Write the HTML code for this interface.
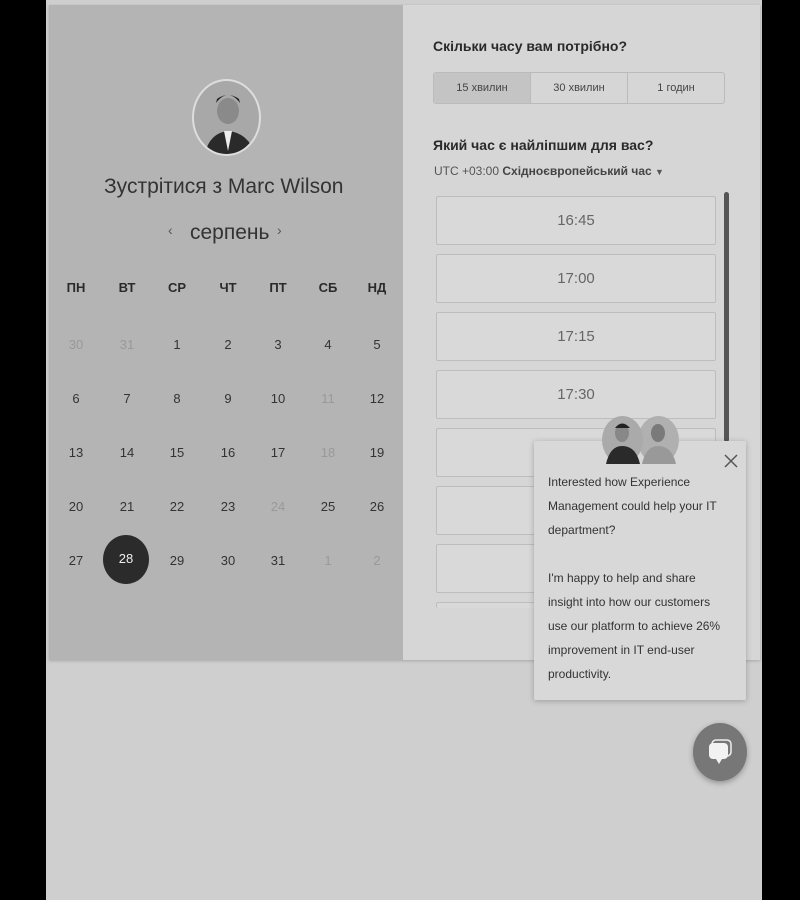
<!DOCTYPE html>
<html><head><meta charset="utf-8"><style>
*{margin:0;padding:0;box-sizing:border-box}
body{width:800px;height:900px;background:#000;position:relative;overflow:hidden;font-family:"Liberation Sans",sans-serif}
.page{position:absolute;left:46px;top:0;width:716px;height:900px;background:#cfcfcf}
.card{position:absolute;left:49px;top:5px;width:711px;height:655px;background:#d6d6d6;box-shadow:0 1px 3px rgba(0,0,0,.2)}
.left{position:absolute;left:49px;top:5px;width:354px;height:655px;background:#b4b4b4}
.abs{position:absolute}
.c{position:absolute;transform:translateX(-50%);font-size:13px;color:#333;text-align:center}
.h{font-weight:bold;font-size:13px;color:#2a2a2a}
.dim{color:#999}
.slot{position:absolute;left:436px;width:280px;height:49px;border:1px solid #bdbdbd;border-radius:2px;background:#d9d9d9;font-size:15px;color:#666;text-align:center;line-height:47px}
</style></head><body>
<div class="page"></div>
<div class="card"></div>
<div class="left"></div>
<div class="abs" style="left:192px;top:79px;width:69px;height:77px;border-radius:50%;border:2px solid #ddd;background:#a8a8a8;overflow:hidden">
<svg width="69" height="77" viewBox="0 0 69 77"><ellipse cx="34" cy="30" rx="11" ry="13" fill="#8a8a8a"/><path d="M22 22 Q34 6 46 22 L45 18 Q34 10 23 18Z" fill="#222"/><path d="M10 77 Q14 52 34 50 Q56 52 62 77Z" fill="#2a2a2a"/><path d="M30 50 L34 70 L38 50Z" fill="#eee"/></svg></div>
<div class="abs" style="left:104px;top:175px;font-size:21px;color:#333">Зустрітися з Marc Wilson</div>
<div class="abs" style="left:168px;top:222px;font-size:14px;color:#555">‹</div>
<div class="abs" style="left:190px;top:221px;font-size:21px;color:#333">серпень</div>
<div class="abs" style="left:277px;top:222px;font-size:14px;color:#555">›</div>
<div class="c h" style="left:76px;top:280px">ПН</div><div class="c h" style="left:127px;top:280px">ВТ</div><div class="c h" style="left:177px;top:280px">СР</div><div class="c h" style="left:228px;top:280px">ЧТ</div><div class="c h" style="left:278px;top:280px">ПТ</div><div class="c h" style="left:328px;top:280px">СБ</div><div class="c h" style="left:377px;top:280px">НД</div>
<div class="c dim" style="left:76px;top:337px">30</div><div class="c dim" style="left:127px;top:337px">31</div><div class="c" style="left:177px;top:337px">1</div><div class="c" style="left:228px;top:337px">2</div><div class="c" style="left:278px;top:337px">3</div><div class="c" style="left:328px;top:337px">4</div><div class="c" style="left:377px;top:337px">5</div>
<div class="c" style="left:76px;top:391px">6</div><div class="c" style="left:127px;top:391px">7</div><div class="c" style="left:177px;top:391px">8</div><div class="c" style="left:228px;top:391px">9</div><div class="c" style="left:278px;top:391px">10</div><div class="c dim" style="left:328px;top:391px">11</div><div class="c" style="left:377px;top:391px">12</div>
<div class="c" style="left:76px;top:445px">13</div><div class="c" style="left:127px;top:445px">14</div><div class="c" style="left:177px;top:445px">15</div><div class="c" style="left:228px;top:445px">16</div><div class="c" style="left:278px;top:445px">17</div><div class="c dim" style="left:328px;top:445px">18</div><div class="c" style="left:377px;top:445px">19</div>
<div class="c" style="left:76px;top:499px">20</div><div class="c" style="left:127px;top:499px">21</div><div class="c" style="left:177px;top:499px">22</div><div class="c" style="left:228px;top:499px">23</div><div class="c dim" style="left:278px;top:499px">24</div><div class="c" style="left:328px;top:499px">25</div><div class="c" style="left:377px;top:499px">26</div>
<div class="c" style="left:76px;top:553px">27</div>
<div class="abs" style="left:103px;top:535px;width:46px;height:49px;border-radius:50%;background:#2b2b2b;color:#eee;font-size:13px;text-align:center;line-height:47px">28</div>
<div class="c" style="left:177px;top:553px">29</div><div class="c" style="left:228px;top:553px">30</div><div class="c" style="left:278px;top:553px">31</div><div class="c dim" style="left:328px;top:553px">1</div><div class="c dim" style="left:377px;top:553px">2</div>
<div class="abs h" style="left:433px;top:38px;font-size:14px">Скільки часу вам потрібно?</div>
<div class="abs" style="left:433px;top:72px;width:292px;height:32px;border:1px solid #bbb;border-radius:3px;display:flex;font-size:11px;color:#444">
<div style="flex:1;background:#c4c4c4;text-align:center;line-height:30px;border-right:1px solid #bbb">15 хвилин</div>
<div style="flex:1;text-align:center;line-height:30px;border-right:1px solid #bbb">30 хвилин</div>
<div style="flex:1;text-align:center;line-height:30px">1 годин</div></div>
<div class="abs h" style="left:433px;top:137px;font-size:14px">Який час є найліпшим для вас?</div>
<div class="abs" style="left:434px;top:164px;font-size:12px;color:#555">UTC +03:00 <b style="color:#444">Східноєвропейський час</b> <span style="font-size:9px">▼</span></div>
<div class="slot" style="top:196px">16:45</div>
<div class="slot" style="top:254px">17:00</div>
<div class="slot" style="top:312px">17:15</div>
<div class="slot" style="top:370px">17:30</div>
<div class="slot" style="top:428px"></div>
<div class="slot" style="top:486px"></div>
<div class="slot" style="top:544px"></div>
<div class="slot" style="top:602px;height:6px;border-bottom:none"></div>
<div class="abs" style="left:403px;top:608px;width:357px;height:52px;background:#d6d6d6"></div>
<div class="abs" style="left:724px;top:192px;width:5px;height:250px;border-radius:3px;background:#555"></div>
<div class="abs" style="left:534px;top:441px;width:212px;height:259px;background:#d8d8d8;box-shadow:0 1px 6px rgba(0,0,0,.25);border-radius:2px"></div>
<div class="abs" style="left:638px;top:416px;width:41px;height:48px;border-radius:50%;background:#b0b0b0"><svg width="41" height="48"><ellipse cx="20" cy="17" rx="7" ry="9" fill="#7a7a7a"/><path d="M4 48 Q8 30 20 30 Q34 30 38 48Z" fill="#999"/></svg></div>
<div class="abs" style="left:602px;top:416px;width:41px;height:48px;border-radius:50%;background:#aaa"><svg width="41" height="48"><ellipse cx="20" cy="17" rx="7" ry="9" fill="#888"/><path d="M13 12 Q20 3 28 12Z" fill="#222"/><path d="M4 48 Q8 30 20 30 Q34 30 38 48Z" fill="#2a2a2a"/></svg></div>
<svg class="abs" style="left:724px;top:454px" width="14" height="14"><path d="M1 1L13 13M13 1L1 13" stroke="#555" stroke-width="1.5"/></svg>
<div class="abs" style="left:548px;top:470px;font-size:12px;line-height:24px;color:#333;width:182px">Interested how Experience Management could help your IT department?<br><br>I'm happy to help and share insight into how our customers use our platform to achieve 26% improvement in IT end-user productivity.</div>
<div class="abs" style="left:693px;top:723px;width:54px;height:58px;border-radius:50%;background:#777;box-shadow:0 2px 6px rgba(0,0,0,.3)">
<svg width="54" height="58"><rect x="19" y="17" width="19" height="16" rx="4" fill="none" stroke="#eee" stroke-width="1.5"/><rect x="16" y="20" width="19" height="16" rx="4" fill="#f2f2f2"/><path d="M23 36 L26 41 L29 36Z" fill="#f2f2f2"/></svg></div>
</body></html>
